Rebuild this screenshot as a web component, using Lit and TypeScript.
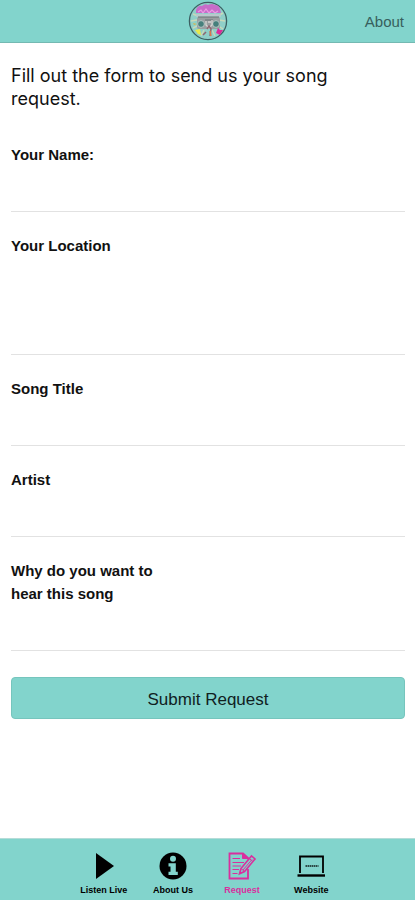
import { LitElement, html, css, svg } from "lit";
import { customElement, state } from "lit/decorators.js";
import { classMap } from "lit/directives/class-map.js";

const logo = html`<svg class="logo" viewBox="0 0 40 40" role="img" aria-label="Station logo">
  <circle cx="20" cy="20" r="18.6" fill="#8fcfc8" stroke="#3c5f62" stroke-width="1.3" />
  <path d="M5 13l5 2M3 20l6-1M5 27l6-3M35 12l-5 3M37 20l-6-1M35 28l-6-4M13 35l3-6M27 35l-3-6" stroke="#c9d8b8" stroke-width="1.5" />
  <path d="M8 9q2-5 6-4q3-3 6-1q4-2 7 0q4 0 5 4l1 4H8z" fill="#c76bc9" />
  <path d="M10 11l3-2 2 3 3-4 3 4 3-3 3 3 3-2" fill="none" stroke="#ec9be4" stroke-width="1.2" />
  <rect x="8" y="13" width="25" height="3" rx="1" fill="#b9c8cb" />
  <rect x="9" y="16" width="23" height="12" rx="2" fill="#9a9fa1" />
  <path d="M10 16h21M17 19h8" stroke="#697577" stroke-width="1.2" />
  <circle cx="13" cy="23" r="3.4" fill="#467f7c" stroke="#b8c6c5" />
  <circle cx="28" cy="23" r="3.4" fill="#467f7c" stroke="#b8c6c5" />
  <path d="M18 20v4l3 3 3-3v-5M20 21h3" fill="none" stroke="#d5d4d2" stroke-width="1.3" />
  <path d="M19 28l2-3 2 3-1 7M18 31l-3 3" fill="none" stroke="#8d6671" stroke-width="1.5" />
  <path d="M7 29l5-1 1 6-3-1z" fill="#e8e94d" />
  <path d="M5 22l4 1-3 1z" fill="#d8b84d" />
  <path d="M30 27l2 2 3 0-3 5-4-2z" fill="#dc2c9c" />
  <path d="M22 30l1 5" stroke="#d9764d" stroke-width="1.5" />
</svg>`;

const icons = {
  listen: svg`<path d="M7 2L25 15L7 28Z" fill="currentColor" />`,
  about: svg`<circle cx="15" cy="15" r="13.5" fill="currentColor" />
    <circle cx="15" cy="7.8" r="3" class="cut" />
    <path d="M10.5 12.2H17.8V20.8H19.8V24H10.5V20.8H12.5V15.4H10.5Z" class="cut" />`,
  request: svg`<g fill="none" stroke="currentColor">
    <path d="M21 8.5V7L16 2.5H2.5V27.5H21V18" stroke-width="1.8" />
    <path d="M15.5 2.5V7.5H21Z" fill="currentColor" stroke-width="1" />
    <path d="M5.5 7.5H13M5.5 11.5H17M5.5 15H14M5.5 18.5H12M5.5 22.5H10.5" stroke-width="1.1" />
    <path d="M14 17.5L24.5 5L28 8L17.5 20.5L12.5 22.8Z" stroke-width="1.6" />
    <path d="M14 17.5L17.5 20.5M22.3 7.5L25.8 10.5M16 19L25 8.5" stroke-width="1" />
  </g>`,
  website: svg`<g fill="none" stroke="currentColor">
    <path d="M4 22V5.5H27V22" stroke-width="1.8" />
    <path d="M1.5 24.5H29" stroke-width="2.4" />
    <path d="M9.5 15H22.5" stroke-width="2" stroke-dasharray="1.5 .5" opacity=".65" />
  </g>`,
};

type TabId = keyof typeof icons;

const tabs: { id: TabId; label: string }[] = [
  { id: "listen", label: "Listen Live" },
  { id: "about", label: "About Us" },
  { id: "request", label: "Request" },
  { id: "website", label: "Website" },
];

const fields = [
  { id: "name", label: "Your Name:", multiline: false },
  { id: "location", label: "Your Location", multiline: true },
  { id: "title", label: "Song Title", multiline: false },
  { id: "artist", label: "Artist", multiline: false },
  { id: "reason", label: "Why do you want to hear this song", multiline: false },
];

@customElement("app-root")
export class AppRoot extends LitElement {
  static styles = css`
    :host {
      --teal: #82d4cc;
      display: flex;
      flex-direction: column;
      min-height: 100vh;
      background: #fff;
      color: #111;
      font-family: "Liberation Sans", Arial, sans-serif;
    }
    * {
      box-sizing: border-box;
    }
    .bar {
      display: grid;
      grid-template-columns: 1fr auto 1fr;
      align-items: center;
      height: 43px;
      padding: 0 11px;
      background: var(--teal);
      border-bottom: 1px solid #74b9b2;
    }
    .logo {
      grid-column: 2;
      display: block;
      width: 40px;
      height: 40px;
    }
    .about {
      justify-self: end;
      color: #37605d;
      font-size: 15px;
      text-decoration: none;
    }
    main {
      flex: 1;
      padding: 21px 10px 24px 11px;
    }
    h1 {
      margin: 0 0 11px;
      max-width: 350px;
      font-family: Inter, "Liberation Sans", sans-serif;
      font-size: 18px;
      font-weight: 400;
      line-height: 23px;
    }
    .field {
      padding-top: 22px;
      border-bottom: 1px solid #e2e2e2;
    }
    label {
      display: block;
      max-width: 150px;
      font-size: 15px;
      font-weight: 700;
      line-height: 23px;
    }
    .entry {
      display: block;
      width: 100%;
      height: 45px;
      padding: 0;
      border: 0;
      outline: 0;
      background: transparent;
      color: inherit;
      font: inherit;
      resize: none;
    }
    .tall {
      height: 97px;
    }
    .submit {
      display: block;
      width: 100%;
      height: 42px;
      margin-top: 26px;
      padding: 3px 0 0;
      border: 1px solid #76c5bd;
      border-radius: 4px;
      background: var(--teal);
      color: #10211f;
      font-family: inherit;
      font-size: 17px;
    }
    nav {
      position: sticky;
      bottom: 0;
      display: flex;
      justify-content: center;
      height: 62px;
      padding-top: 12px;
      background: var(--teal);
      border-top: 1px solid #b5dcd8;
    }
    .tab {
      display: flex;
      flex: 0 0 calc(100% / 6);
      flex-direction: column;
      align-items: center;
      gap: 3px;
      color: #000;
      font-size: 9px;
      font-weight: 700;
      line-height: 12px;
      text-decoration: none;
      white-space: nowrap;
    }
    .active {
      color: #d92f9e;
    }
    .icon {
      width: 30px;
      height: 30px;
    }
    .cut {
      fill: var(--teal);
    }
  `;

  @state() private current: TabId = "request";

  private select(event: Event, id: TabId) {
    event.preventDefault();
    this.current = id;
  }

  render() {
    return html`
      <header class="bar">
        ${logo}
        <a class="about" href="#about">About</a>
      </header>
      <main>
        <h1>Fill out the form to send us your song request.</h1>
        <form @submit=${(e: Event) => e.preventDefault()}>
          ${fields.map(
            (f) => html`<div class="field">
              <label for=${f.id}>${f.label}</label>
              ${f.multiline
                ? html`<textarea class="entry tall" id=${f.id} name=${f.id}></textarea>`
                : html`<input class="entry" id=${f.id} name=${f.id} type="text" />`}
            </div>`
          )}
          <button class="submit" type="submit">Submit Request</button>
        </form>
      </main>
      <nav aria-label="Main">
        ${tabs.map(
          (t) => html`<a
            class=${classMap({ tab: true, active: t.id === this.current })}
            href="#${t.id}"
            @click=${(e: Event) => this.select(e, t.id)}
          >
            <svg class="icon" viewBox="0 0 30 30" aria-hidden="true">${icons[t.id]}</svg>
            ${t.label}
          </a>`
        )}
      </nav>
    `;
  }
}
